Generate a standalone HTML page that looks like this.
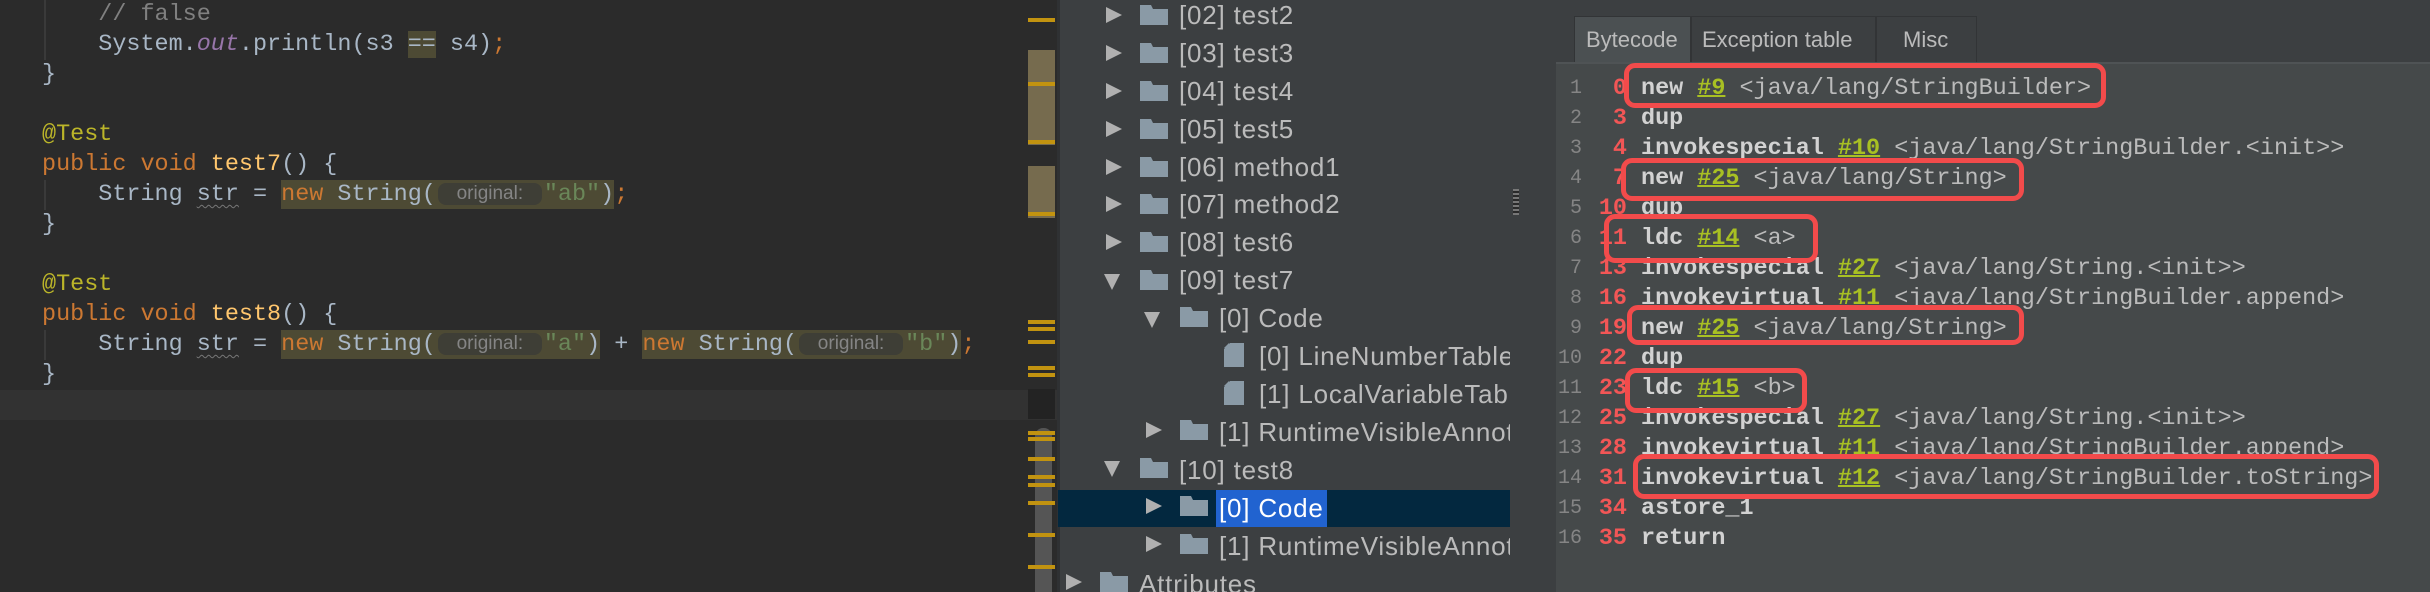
<!DOCTYPE html>
<html><head><meta charset="utf-8"><style>
*{margin:0;padding:0;box-sizing:border-box}
body{width:2430px;height:592px;overflow:hidden;background:#3c3f41;position:relative;font-family:"Liberation Sans",sans-serif}
.ed{position:absolute;left:0;top:0;width:1057px;height:592px;background:#2b2b2b;overflow:hidden}
.ln{position:absolute;left:42px;height:30px;line-height:30px;font-family:"Liberation Mono",monospace;font-size:23.45px;color:#a9b7c6;white-space:pre}
.kw{color:#cc7832}.fn{color:#ffc66d}.an{color:#bbb529}.st{color:#6a8759}.cm{color:#808080}.pu{color:#9876aa;font-style:italic}
.hl{background:#4d4a34;display:inline-block;height:29px}
.pill{display:inline-block;width:104px;height:22px;margin:0 2px;background:#3e3e36;border-radius:8px;font-family:"Liberation Sans",sans-serif;font-size:19px;line-height:22px;color:#858585;text-align:center;vertical-align:1px}
.wv{text-decoration:underline wavy #777;text-decoration-thickness:1px;text-underline-offset:4px;color:#a9b7c6}
.g{position:absolute;left:44px;width:2px;background:#3a3a3a}
.mk{position:absolute;left:1028px;width:27px;height:4px;background:#c29310}
.tr{position:absolute;left:0;height:38px;line-height:38px;font-size:26px;letter-spacing:.8px;color:#bbbbbb;white-space:nowrap}
.bc{position:absolute;left:1556px;height:30px;line-height:30px;font-family:"Liberation Mono",monospace;font-size:23.45px;white-space:pre;color:#bbbbbb}
.bc .n{position:absolute;left:0;width:26px;text-align:right;color:#858585;font-size:20px}
.bc .o{position:absolute;left:20px;width:51px;text-align:right;color:#f25656;font-weight:bold}
.bc .i{position:absolute;left:85px;}
.bc b{color:#d2d2d2}
.bc u{color:#a8c023;font-weight:bold;text-decoration-thickness:2px}
.box{position:absolute;border:5px solid #f24b4b;border-radius:11px}
</style></head><body>
<div class="ed">
<div style="position:absolute;left:0;top:390px;width:1057px;height:30px;background:#323232"></div>
<div class="g" style="top:0;height:60px"></div>
<div class="g" style="top:180px;height:30px"></div>
<div class="g" style="top:330px;height:30px"></div>
<div class="ln" style="top:0"><span class="cm">    // false</span></div>
<div class="ln" style="top:30px">    System.<span class="pu">out</span>.println(s3 <span style="background:#4d4a34">==</span> s4)<span class="kw">;</span></div>
<div class="ln" style="top:60px">}</div>
<div class="ln" style="top:120px"><span class="an">@Test</span></div>
<div class="ln" style="top:150px"><span class="kw">public void </span><span class="fn">test7</span>() {</div>
<div class="ln" style="top:180px">    String <span class="wv">str</span> = <span class="hl"><span class="kw">new</span> String(<span class="pill">original:</span><span class="st">"ab"</span>)</span><span class="kw">;</span></div>
<div class="ln" style="top:210px">}</div>
<div class="ln" style="top:270px"><span class="an">@Test</span></div>
<div class="ln" style="top:300px"><span class="kw">public void </span><span class="fn">test8</span>() {</div>
<div class="ln" style="top:330px">    String <span class="wv">str</span> = <span class="hl"><span class="kw">new</span> String(<span class="pill">original:</span><span class="st">"a"</span>)</span> + <span class="hl"><span class="kw">new</span> String(<span class="pill">original:</span><span class="st">"b"</span>)</span><span class="kw">;</span></div>
<div class="ln" style="top:360px">}</div>
<div style="position:absolute;left:1028px;top:50px;width:27px;height:95px;background:#766b4e"></div>
<div style="position:absolute;left:1028px;top:166px;width:27px;height:52px;background:#766b4e"></div>
<div style="position:absolute;left:1028px;top:389px;width:27px;height:30px;background:#232323"></div>
<div style="position:absolute;left:1035px;top:428px;width:17px;height:170px;background:#555;border-radius:8px 8px 0 0"></div>
<div class="mk" style="top:18px"></div><div class="mk" style="top:82px"></div><div class="mk" style="top:140px"></div><div class="mk" style="top:212px"></div>
<div class="mk" style="top:320px"></div><div class="mk" style="top:327px"></div><div class="mk" style="top:340px"></div><div class="mk" style="top:366px"></div><div class="mk" style="top:373px"></div>
<div class="mk" style="top:431px"></div><div class="mk" style="top:437px"></div><div class="mk" style="top:457px"></div><div class="mk" style="top:475px"></div><div class="mk" style="top:483px"></div><div class="mk" style="top:501px"></div><div class="mk" style="top:533px"></div><div class="mk" style="top:565px"></div>
</div>

<div style="position:absolute;left:1057px;top:0;width:3px;height:592px;background:#2f3133"></div>
<div style="position:absolute;left:1058px;top:490px;width:452px;height:37px;background:#03283f"></div>
<div style="position:absolute;left:1513px;top:189px;width:6px;height:26px;background:repeating-linear-gradient(#777 0 2px,#2a2a2a 2px 4px)"></div>
<svg width="0" height="0" style="position:absolute">
<defs>
<symbol id="fold" viewBox="0 0 28 20"><path d="M0 0H11L13 4H28V20H0Z" fill="#8a9aa6"/></symbol>
<symbol id="file" viewBox="0 0 20 24"><path d="M6 0H20V24H0V6Z" fill="#8a9aa6"/><path d="M0 5L5 0V5Z" fill="#8a9aa6"/></symbol>
</defs></svg>
<div style="position:absolute;left:1058px;top:0;width:452px;height:592px;overflow:hidden">
<svg style="position:absolute;left:0;top:0" width="452" height="592">
<g fill="#b0b0b0">
<path d="M48 7L64 15L48 23Z"/><path d="M48 45L64 53L48 61Z"/><path d="M48 83L64 91L48 99Z"/><path d="M48 121L64 129L48 137Z"/><path d="M48 159L64 167L48 175Z"/><path d="M48 196L64 204L48 212Z"/><path d="M48 234L64 242L48 250Z"/>
<path d="M46 274L62 274L54 290Z"/>
<path d="M86 312L102 312L94 328Z"/>
<path d="M88 422L104 430L88 438Z"/>
<path d="M46 461L62 461L54 477Z"/>
<path d="M88 498L104 506L88 514Z"/>
<path d="M88 536L104 544L88 552Z"/>
<path d="M8 574L24 582L8 590Z"/>
</g>
<g>
<use href="#fold" x="82" y="5" width="28" height="20"/><use href="#fold" x="82" y="43" width="28" height="20"/><use href="#fold" x="82" y="81" width="28" height="20"/><use href="#fold" x="82" y="119" width="28" height="20"/><use href="#fold" x="82" y="157" width="28" height="20"/><use href="#fold" x="82" y="194" width="28" height="20"/><use href="#fold" x="82" y="232" width="28" height="20"/><use href="#fold" x="82" y="270" width="28" height="20"/>
<use href="#fold" x="122" y="307" width="28" height="20"/>
<use href="#file" x="166" y="343" width="20" height="24"/><use href="#file" x="166" y="381" width="20" height="24"/>
<use href="#fold" x="122" y="420" width="28" height="20"/>
<use href="#fold" x="82" y="458" width="28" height="20"/>
<use href="#fold" x="122" y="496" width="28" height="20"/><use href="#fold" x="122" y="534" width="28" height="20"/>
<use href="#fold" x="42" y="572" width="28" height="20"/>
</g>
</svg>
<div class="tr" style="left:121px;top:-4px">[02] test2</div>
<div class="tr" style="left:121px;top:34px">[03] test3</div>
<div class="tr" style="left:121px;top:72px">[04] test4</div>
<div class="tr" style="left:121px;top:110px">[05] test5</div>
<div class="tr" style="left:121px;top:148px">[06] method1</div>
<div class="tr" style="left:121px;top:185px">[07] method2</div>
<div class="tr" style="left:121px;top:223px">[08] test6</div>
<div class="tr" style="left:121px;top:261px">[09] test7</div>
<div class="tr" style="left:161px;top:299px">[0] Code</div>
<div class="tr" style="left:201px;top:337px">[0] LineNumberTable</div>
<div class="tr" style="left:201px;top:375px">[1] LocalVariableTable</div>
<div class="tr" style="left:161px;top:413px">[1] RuntimeVisibleAnnotations</div>
<div class="tr" style="left:121px;top:451px">[10] test8</div>
<div class="tr" style="left:158px;top:490px;height:37px;line-height:37px;padding:0 3px;background:#2163d0;color:#fff">[0] Code</div>
<div class="tr" style="left:161px;top:527px">[1] RuntimeVisibleAnnotations</div>
<div class="tr" style="left:81px;top:565px">Attributes</div>
</div>

<div style="position:absolute;left:1556px;top:62px;width:874px;height:530px;background:#45494a"></div>
<div style="position:absolute;left:1556px;top:62px;width:874px;height:2px;background:#4f5355"></div>
<div style="position:absolute;left:1574px;top:16px;width:403px;height:46px;background:#3c3f41;border:1px solid #323436;border-bottom:none"></div>
<div style="position:absolute;left:1575px;top:17px;width:116px;height:45px;background:#4b5052"></div>
<div style="position:absolute;left:1690px;top:17px;width:2px;height:45px;background:#323436"></div>
<div style="position:absolute;left:1875px;top:17px;width:2px;height:45px;background:#323436"></div>
<div style="position:absolute;left:1586px;top:17px;height:45px;line-height:45px;font-size:22px;color:#bbb">Bytecode</div>
<div style="position:absolute;left:1702px;top:17px;height:45px;line-height:45px;font-size:22px;color:#bbb">Exception table</div>
<div style="position:absolute;left:1903px;top:17px;height:45px;line-height:45px;font-size:22px;color:#bbb">Misc</div>

<div class="bc" style="top:74px"><span class="n">1</span><span class="o">0</span><span class="i"><b>new</b> <u>#9</u> &lt;java/lang/StringBuilder&gt;</span></div>
<div class="bc" style="top:104px"><span class="n">2</span><span class="o">3</span><span class="i"><b>dup</b></span></div>
<div class="bc" style="top:134px"><span class="n">3</span><span class="o">4</span><span class="i"><b>invokespecial</b> <u>#10</u> &lt;java/lang/StringBuilder.&lt;init&gt;&gt;</span></div>
<div class="bc" style="top:164px"><span class="n">4</span><span class="o">7</span><span class="i"><b>new</b> <u>#25</u> &lt;java/lang/String&gt;</span></div>
<div class="bc" style="top:194px"><span class="n">5</span><span class="o">10</span><span class="i"><b>dup</b></span></div>
<div class="bc" style="top:224px"><span class="n">6</span><span class="o">11</span><span class="i"><b>ldc</b> <u>#14</u> &lt;a&gt;</span></div>
<div class="bc" style="top:254px"><span class="n">7</span><span class="o">13</span><span class="i"><b>invokespecial</b> <u>#27</u> &lt;java/lang/String.&lt;init&gt;&gt;</span></div>
<div class="bc" style="top:284px"><span class="n">8</span><span class="o">16</span><span class="i"><b>invokevirtual</b> <u>#11</u> &lt;java/lang/StringBuilder.append&gt;</span></div>
<div class="bc" style="top:314px"><span class="n">9</span><span class="o">19</span><span class="i"><b>new</b> <u>#25</u> &lt;java/lang/String&gt;</span></div>
<div class="bc" style="top:344px"><span class="n">10</span><span class="o">22</span><span class="i"><b>dup</b></span></div>
<div class="bc" style="top:374px"><span class="n">11</span><span class="o">23</span><span class="i"><b>ldc</b> <u>#15</u> &lt;b&gt;</span></div>
<div class="bc" style="top:404px"><span class="n">12</span><span class="o">25</span><span class="i"><b>invokespecial</b> <u>#27</u> &lt;java/lang/String.&lt;init&gt;&gt;</span></div>
<div class="bc" style="top:434px"><span class="n">13</span><span class="o">28</span><span class="i"><b>invokevirtual</b> <u>#11</u> &lt;java/lang/StringBuilder.append&gt;</span></div>
<div class="bc" style="top:464px"><span class="n">14</span><span class="o">31</span><span class="i"><b>invokevirtual</b> <u>#12</u> &lt;java/lang/StringBuilder.toString&gt;</span></div>
<div class="bc" style="top:494px"><span class="n">15</span><span class="o">34</span><span class="i"><b>astore_1</b></span></div>
<div class="bc" style="top:524px"><span class="n">16</span><span class="o">35</span><span class="i"><b>return</b></span></div>

<div class="box" style="left:1624px;top:63px;width:482px;height:45px"></div>
<div class="box" style="left:1621px;top:158px;width:403px;height:43px"></div>
<div class="box" style="left:1604px;top:214px;width:214px;height:49px"></div>
<div class="box" style="left:1627px;top:305px;width:397px;height:40px"></div>
<div class="box" style="left:1625px;top:368px;width:182px;height:45px"></div>
<div class="box" style="left:1633px;top:454px;width:746px;height:45px"></div>
</body></html>
